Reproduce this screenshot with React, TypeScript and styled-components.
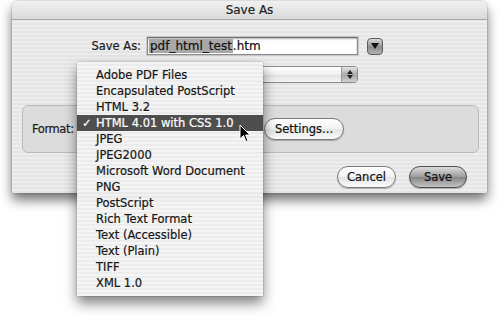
import React from "react";
import styled, { createGlobalStyle } from "styled-components";

const Global = createGlobalStyle`
  html, body { margin: 0; padding: 0; background: #ffffff; }
  body {
    font-family: "DejaVu Sans", "Liberation Sans", sans-serif;
    font-size: 11.5px;
    color: #111;
    -webkit-text-stroke: 0.2px currentColor;
  }
`;

const Page = styled.div`
  position: relative;
  width: 500px;
  height: 316px;
  overflow: hidden;
  padding-top: 1px;
  box-sizing: border-box;
`;

const Window = styled.div`
  margin-left: 12px;
  width: 475px;
  border-radius: 6px 6px 2px 2px;
  overflow: hidden;
  box-shadow: 0 7px 12px rgba(0, 0, 0, 0.55), 0 0 2px rgba(0, 0, 0, 0.35);
  background: repeating-linear-gradient(#ededed 0 2px, #e5e5e5 2px 4px);
  display: flex;
  flex-direction: column;
`;

const TitleBar = styled.div`
  height: 18px;
  border-bottom: 1px solid #a8a8a8;
  background: linear-gradient(#f1f1f1, #dadada);
  display: flex;
  align-items: center;
  justify-content: center;
  font-size: 12px;
  color: #222;
`;

const Body = styled.div`
  display: flex;
  flex-direction: column;
  padding: 17px 8px 5px 10px;
`;

const FieldRow = styled.div<{ $mt?: number }>`
  display: flex;
  align-items: center;
  margin-top: ${(p) => p.$mt ?? 0}px;
`;

const Label = styled.div<{ $w: number }>`
  width: ${(p) => p.$w}px;
  text-align: right;
  padding-right: 6px;
  box-sizing: border-box;
  font-size: 11.5px;
  color: #1a1a1a;
`;

const Spacer = styled.div<{ $w: number }>`
  width: ${(p) => p.$w}px;
  flex: none;
`;

const TextField = styled.div`
  width: 211px;
  height: 18px;
  box-sizing: border-box;
  border: 1px solid #8c8c8c;
  border-top-color: #6e6e6e;
  box-shadow: inset 0 1px 2px rgba(0, 0, 0, 0.3), 0 0 0 1px #c8c8c8;
  background: #fff;
  display: flex;
  align-items: center;
  padding-left: 1px;
  font-size: 12px;
  white-space: nowrap;
`;

const Selection = styled.span`
  background: #a8a8a8;
  padding: 0 1px;
`;

const DisclosureButton = styled.div`
  margin-left: 9px;
  width: 16px;
  height: 17px;
  box-sizing: border-box;
  border-radius: 4px;
  border: 1px solid #5d5d5d;
  background: linear-gradient(#d8d8d8, #8e8e8e 55%, #b4b4b4);
  display: flex;
  align-items: center;
  justify-content: center;
`;

const PopUp = styled.div`
  width: 211px;
  height: 17px;
  box-sizing: border-box;
  border: 1px solid #8a8a8a;
  border-radius: 4px;
  background: linear-gradient(#ffffff, #f0f0f0 50%, #e2e2e2 51%, #f4f4f4);
  display: flex;
  align-items: center;
  justify-content: flex-end;
`;

const Stepper = styled.div`
  width: 15px;
  height: 15px;
  border-left: 1px solid #9a9a9a;
  border-radius: 0 3px 3px 0;
  background: linear-gradient(#e4e4e4, #a8a8a8 55%, #cfcfcf);
  display: flex;
  flex-direction: column;
  align-items: center;
  justify-content: center;
  gap: 1px;
`;

const Group = styled.div`
  margin-top: 22px;
  height: 48px;
  box-sizing: border-box;
  border: 1px solid #b9b9b9;
  border-radius: 6px;
  background: #dcdcdc;
  display: flex;
  align-items: center;
  padding: 0 0 1px 9px;
`;

const FormatLabel = styled.div`
  width: 46px;
  font-size: 11.5px;
  letter-spacing: -0.4px;
  color: #1a1a1a;
`;

const FormatPopUp = styled(PopUp)`
  width: 180px;
`;

const PillButton = styled.div<{ $w: number; $default?: boolean }>`
  width: ${(p) => p.$w}px;
  height: 22px;
  box-sizing: border-box;
  border-radius: 11px;
  border: 1px solid ${(p) => (p.$default ? "#4d4d4d" : "#7a7a7a")};
  background: ${(p) =>
    p.$default
      ? "linear-gradient(#dcdcdc, #9c9c9c 50%, #858585 52%, #c4c4c4)"
      : "linear-gradient(#ffffff, #f2f2f2 50%, #e4e4e4 52%, #fbfbfb)"};
  box-shadow: 0 1px 1px rgba(0, 0, 0, 0.25);
  display: flex;
  align-items: center;
  justify-content: center;
  font-size: 11.5px;
  color: #111;
`;

const SettingsButton = styled(PillButton)`
  margin-left: 6px;
`;

const ButtonRow = styled.div`
  margin-top: 13px;
  display: flex;
  justify-content: flex-end;
  gap: 13px;
  padding-right: 12px;
`;

const Menu = styled.div`
  position: absolute;
  left: 77px;
  top: 62px;
  width: 186px;
  height: 234px;
  box-sizing: border-box;
  padding-top: 5px;
  background: repeating-linear-gradient(rgba(245, 245, 245, 0.96) 0 2px, rgba(236, 236, 236, 0.96) 2px 4px);
  box-shadow: 0 7px 12px rgba(0, 0, 0, 0.5), 0 0 1px rgba(0, 0, 0, 0.5);
  display: flex;
  flex-direction: column;
`;

const MenuItem = styled.div<{ $selected?: boolean }>`
  height: 16px;
  display: flex;
  align-items: center;
  padding-left: 19px;
  position: relative;
  font-size: 11.5px;
  white-space: nowrap;
  color: ${(p) => (p.$selected ? "#ffffff" : "#161616")};
  background: ${(p) => (p.$selected ? "#4e4e4e" : "transparent")};
`;

const Check = styled.span`
  position: absolute;
  left: 5px;
  font-size: 11.5px;
`;

const Cursor = styled.svg`
  position: absolute;
  left: 239px;
  top: 124px;
`;

const items = [
  "Adobe PDF Files",
  "Encapsulated PostScript",
  "HTML 3.2",
  "HTML 4.01 with CSS 1.0",
  "JPEG",
  "JPEG2000",
  "Microsoft Word Document",
  "PNG",
  "PostScript",
  "Rich Text Format",
  "Text (Accessible)",
  "Text (Plain)",
  "TIFF",
  "XML 1.0",
];

const SELECTED = "HTML 4.01 with CSS 1.0";

export default function App() {
  return (
    <Page>
      <Global />
      <Window>
        <TitleBar>Save As</TitleBar>
        <Body>
          <FieldRow>
            <Label $w={125}>Save As:</Label>
            <TextField>
              <Selection>pdf_html_test</Selection>.htm
            </TextField>
            <DisclosureButton>
              <svg width="8" height="6" viewBox="0 0 8 6">
                <path d="M0 0 H8 L4 6 Z" fill="#111" />
              </svg>
            </DisclosureButton>
          </FieldRow>
          <FieldRow $mt={11}>
            <Spacer $w={125} />
            <PopUp>
              <Stepper>
                <svg width="6" height="4" viewBox="0 0 6 4">
                  <path d="M0 4 H6 L3 0 Z" fill="#222" />
                </svg>
                <svg width="6" height="4" viewBox="0 0 6 4">
                  <path d="M0 0 H6 L3 4 Z" fill="#222" />
                </svg>
              </Stepper>
            </PopUp>
          </FieldRow>
          <Group>
            <FormatLabel>Format:</FormatLabel>
            <FormatPopUp />
            <SettingsButton $w={80}>Settings...</SettingsButton>
          </Group>
          <ButtonRow>
            <PillButton $w={59}>Cancel</PillButton>
            <PillButton $w={58} $default>
              Save
            </PillButton>
          </ButtonRow>
        </Body>
      </Window>
      <Menu>
        {items.map((it) => (
          <MenuItem key={it} $selected={it === SELECTED}>
            {it === SELECTED && <Check>✓</Check>}
            {it}
          </MenuItem>
        ))}
      </Menu>
      <Cursor width="12" height="19" viewBox="0 0 12 19">
        <path
          d="M1 1 L1 15 L4.5 11.5 L7 17.5 L9 16.7 L6.6 11 L11 11 Z"
          fill="#000"
          stroke="#fff"
          strokeWidth="1"
          strokeLinejoin="round"
        />
      </Cursor>
    </Page>
  );
}
